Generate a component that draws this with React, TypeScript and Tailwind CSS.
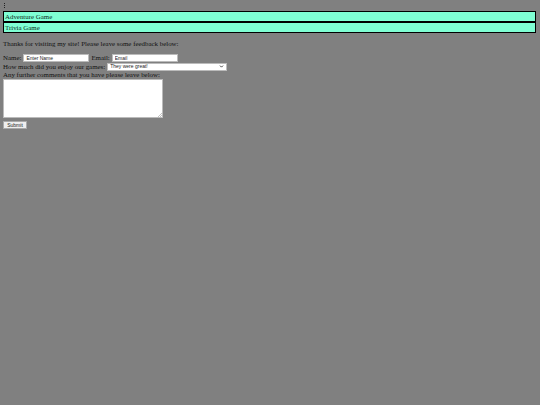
import { ChevronDown } from "lucide-react";

const games = ["Adventure Game", "Trivia Game"];

export default function App() {
  return (
    <div className="min-h-[405px] w-[540px] bg-[#808080] text-[#111] font-['Liberation_Serif',serif] text-[6.9px] leading-[8px]">
      {/* tiny marker */}
      <div className="h-[11px] pl-[4px] pt-[3px]">
        <div className="w-px h-[5px] border-l border-dotted border-[#222]" />
      </div>

      {/* GAME LINKS */}
      <div className="ml-[3px] mr-[4px]">
        {games.map((g) => (
          <div
            key={g}
            className="h-[11px] bg-[#7fffd4] border border-black pl-[1px] leading-[9px] text-[#0d2b22]"
          >
            {g}
          </div>
        ))}
      </div>

      {/* FEEDBACK */}
      <p className="mt-[7px] ml-[3px]">
        Thanks for visiting my site! Please leave some feedback below:
      </p>

      <form className="mt-[5px] ml-[3px]">
        <div className="flex items-center h-[9px]">
          <span>Name:</span>
          <input
            defaultValue="Enter Name"
            className="ml-[2px] w-[66px] h-[8px] bg-white border border-[#bbb] px-[2px] text-[5px] leading-[5px] font-['Liberation_Sans',sans-serif] text-[#222] outline-none"
          />
          <span className="ml-[2px]">Email:</span>
          <input
            defaultValue="Email"
            className="ml-[2px] w-[66px] h-[8px] bg-white border border-[#bbb] px-[2px] text-[5px] leading-[5px] font-['Liberation_Sans',sans-serif] text-[#222] outline-none"
          />
        </div>

        <div className="flex items-center h-[9px]">
          <span>How much did you enjoy our games:</span>
          <div className="relative ml-[2px]">
            <select
              defaultValue="great"
              className="block appearance-none w-[120px] h-[8px] bg-white border border-[#bbb] pl-[2px] text-[5px] leading-[5px] font-['Liberation_Sans',sans-serif] text-[#222] outline-none"
            >
              <option value="great">They were great!</option>
              <option value="ok">They were ok</option>
              <option value="bad">Not for me</option>
            </select>
            <ChevronDown
              size={5}
              strokeWidth={4}
              className="absolute right-[3px] top-[1.5px] text-[#222] pointer-events-none"
            />
          </div>
        </div>

        <div className="h-[8px]">
          Any further comments that you have please leave below:
        </div>

        <div className="relative w-[160px]">
          <textarea className="block w-[160px] h-[39px] bg-white border border-[#bbb] outline-none resize-none" />
          {/* resize grip */}
          <svg
            width="4"
            height="4"
            viewBox="0 0 4 4"
            className="absolute right-[1px] bottom-[1px] pointer-events-none"
          >
            <path d="M4 0L0 4M4 2L2 4" stroke="#999" strokeWidth="0.6" />
          </svg>
        </div>

        <button
          type="button"
          className="block mt-[3px] w-[24px] h-[8px] bg-[#efefef] border border-[#aaa] text-[5px] leading-[5px] font-['Liberation_Sans',sans-serif] text-[#222]"
        >
          Submit
        </button>
      </form>
    </div>
  );
}
